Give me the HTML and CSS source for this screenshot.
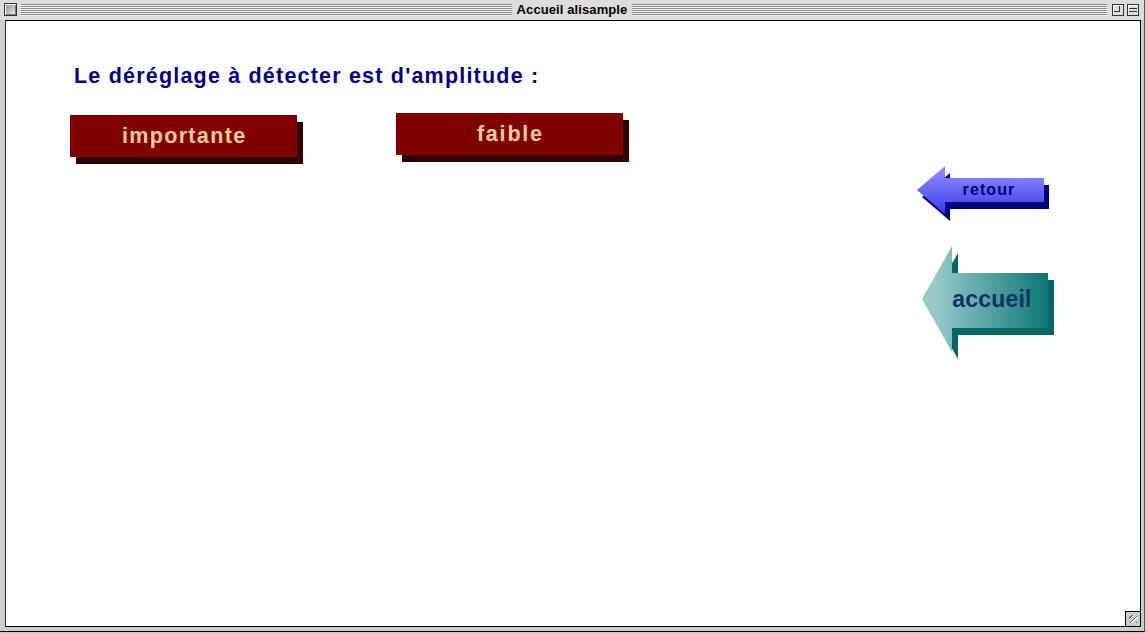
FILE: index.html
```html
<!DOCTYPE html>
<html lang="fr">
<head>
<meta charset="utf-8">
<title>Accueil alisample</title>
<link rel="stylesheet" href="styles.css">
</head>
<body>
<div class="window">
  <div class="titlebar">
    <div class="closebox"></div>
    <div class="stripes stripes-left"></div>
    <div class="title">Accueil alisample</div>
    <div class="stripes stripes-right"></div>
    <div class="zoombox"><span></span></div>
    <div class="collapsebox"><span></span></div>
  </div>
  <div class="content">
    <div class="main">
      <h1 class="question">Le déréglage à détecter est d'amplitude :</h1>
      <div class="choices">
        <div class="choice choice-importante">importante</div>
        <div class="choice choice-faible">faible</div>
      </div>
    </div>
    <div class="nav">
      <svg class="arrow" width="144" height="62" viewBox="914 163 144 62" aria-label="retour">
        <defs>
          <linearGradient id="gRetour" gradientUnits="userSpaceOnUse" x1="0" y1="166" x2="0" y2="214">
            <stop offset="0" stop-color="#9494ff"/>
            <stop offset="1" stop-color="#3a3ae6"/>
          </linearGradient>
        </defs>
        <polygon points="922,197 950,173 950,185 1049,185 1049,209 950,209 950,221" fill="#000080"/>
        <polygon points="917,190 945,166 945,178 1044,178 1044,202 945,202 945,214" fill="url(#gRetour)"/>
        <text class="label-retour" x="989" y="195" text-anchor="middle">retour</text>
      </svg>
      <svg class="arrow" width="144" height="120" viewBox="914 244 144 120" aria-label="accueil">
        <defs>
          <linearGradient id="gAccueil" gradientUnits="userSpaceOnUse" x1="935" y1="0" x2="1048" y2="0">
            <stop offset="0" stop-color="#96caca"/>
            <stop offset="1" stop-color="#0e7676"/>
          </linearGradient>
        </defs>
        <polygon points="928,306 958,253 958,280 1054,280 1054,335 958,335 958,359" fill="#006666"/>
        <polygon points="922,299 952,246 952,273 1048,273 1048,328 952,328 952,352" fill="url(#gAccueil)"/>
        <text class="label-accueil" x="992" y="307" text-anchor="middle">accueil</text>
      </svg>
    </div>
    <div class="grip"></div>
  </div>
</div>
</body>
</html>
```

FILE: styles.css
```css
html, body {
  margin: 0;
  padding: 0;
  background: #cccccc;
}

body {
  width: 1146px;
  height: 633px;
  overflow: hidden;
  font-family: "Liberation Sans", Arial, sans-serif;
}

.window {
  box-sizing: border-box;
  width: 1145px;
  height: 632px;
  background: #cccccc;
  border-right: 1px solid #555555;
  border-bottom: 1px solid #000000;
  display: flex;
  flex-direction: column;
}

/* ---------- title bar ---------- */
.titlebar {
  height: 20px;
  flex: none;
  background: #dddddd;
  display: flex;
  align-items: flex-start;
  padding-left: 4px;
}

.closebox {
  box-sizing: border-box;
  width: 13px;
  height: 13px;
  margin-top: 3px;
  border: 1px solid #333333;
  background: linear-gradient(135deg, #888888, #f4f4f4);
  box-shadow: inset 1px 1px 0 #ffffff, inset -1px -1px 0 #777777;
}

.stripes {
  height: 12px;
  margin-top: 4px;
  background: repeating-linear-gradient(to bottom, #8a8a8a 0 1px, #f4f4f4 1px 2px);
}

.stripes-left {
  width: 491px;
  margin-left: 4px;
}

.stripes-right {
  width: 475px;
}

.title {
  width: 120px;
  text-align: center;
  font-weight: bold;
  font-size: 13px;
  line-height: 20px;
  letter-spacing: 0.1px;
  color: #000000;
}

.zoombox,
.collapsebox {
  box-sizing: border-box;
  width: 12px;
  height: 12px;
  margin-top: 4px;
  border: 1px solid #333333;
  background: #dddddd;
  box-shadow: inset 1px 1px 0 #ffffff;
  position: relative;
}

.zoombox {
  margin-left: 5px;
}

.collapsebox {
  margin-left: 3px;
}

.zoombox span {
  position: absolute;
  left: 1px;
  top: 1px;
  width: 5px;
  height: 5px;
  border-right: 1px solid #333333;
  border-bottom: 1px solid #333333;
}

.collapsebox span {
  position: absolute;
  left: 1px;
  right: 1px;
  top: 3px;
  height: 2px;
  border-top: 1px solid #333333;
  border-bottom: 1px solid #333333;
}

/* ---------- content ---------- */
.content {
  box-sizing: border-box;
  flex: none;
  height: 607px;
  margin: 0 3px 0 5px;
  background: #ffffff;
  border: 1px solid #000000;
  border-left-color: #2a2a5a;
  display: flex;
  position: relative;
}

.main {
  flex: 1;
  padding: 43px 0 0 64px;
}

.question {
  margin: 0 0 0 4px;
  font-weight: bold;
  font-size: 21.5px;
  line-height: 24px;
  letter-spacing: 1.2px;
  color: #000080;
}

.choices {
  display: flex;
  align-items: flex-start;
  margin-top: 25px;
}

.choice {
  width: 227px;
  height: 42px;
  background: #800000;
  color: #ffcc99;
  font-weight: bold;
  font-size: 21.5px;
  line-height: 42px;
  text-align: center;
  box-shadow: 6px 7px 0 #330000;
}

.choice-importante {
  margin-top: 2px;
  letter-spacing: 1.35px;
  text-indent: 1.35px;
}

.choice-faible {
  margin-left: 99px;
  letter-spacing: 1.8px;
  text-indent: 1.8px;
}

.nav {
  width: 144px;
  margin-right: 82px;
  padding-top: 142px;
  display: flex;
  flex-direction: column;
  gap: 19px;
}

.arrow {
  display: block;
}

.label-retour {
  font-family: "Liberation Sans", Arial, sans-serif;
  font-weight: bold;
  font-size: 16px;
  letter-spacing: 1.1px;
  fill: #000080;
}

.label-accueil {
  font-family: "Liberation Sans", Arial, sans-serif;
  font-weight: bold;
  font-size: 23px;
  letter-spacing: 0.2px;
  fill: #0d3366;
}

.grip {
  position: absolute;
  right: 0;
  bottom: 0;
  width: 15px;
  height: 15px;
  box-sizing: border-box;
  border-left: 1px solid #000000;
  border-top: 1px solid #000000;
  background:
    repeating-linear-gradient(135deg, #cccccc 0 2px, #666666 2px 3px, #ffffff 3px 4px) content-box,
    #cccccc;
  padding: 3px;
}
```
